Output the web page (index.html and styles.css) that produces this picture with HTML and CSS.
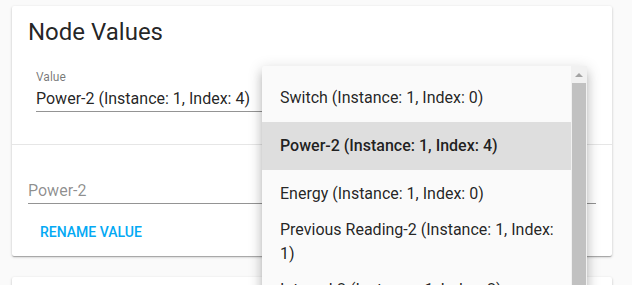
FILE: index.html
```html
<!DOCTYPE html>
<html lang="en">
<head>
    <meta charset="UTF-8">
    <title>Node Values</title>
    <link rel="stylesheet" href="styles.css">
</head>
<body>
    <div class="card">
        <h2 class="card-title">Node Values</h2>

        <div class="select-field">
            <label class="field-label">Value</label>
            <div class="select-input">Power-2 (Instance: 1, Index: 4)</div>
        </div>

        <div class="divider"></div>

        <div class="rename">
            <input class="text-input" type="text" placeholder="Power-2">
            <div class="actions">
                <button class="btn-text">Rename value</button>
            </div>
        </div>
    </div>

    <div class="card card-next"></div>

    <!-- menu aberto do select, fica por cima do card -->
    <div class="menu">
        <ul class="menu-list">
            <li class="menu-item">Switch (Instance: 1, Index: 0)</li>
            <li class="menu-item selected">Power-2 (Instance: 1, Index: 4)</li>
            <li class="menu-item">Energy (Instance: 1, Index: 0)</li>
            <li class="menu-item">Previous Reading-2 (Instance: 1, Index: 1)</li>
            <li class="menu-item">Interval-2 (Instance: 1, Index: 2)</li>
        </ul>
        <div class="scrollbar">
            <div class="scroll-arrow"></div>
            <div class="scroll-thumb"></div>
        </div>
    </div>
</body>
</html>
```

FILE: styles.css
```css
body {
    margin: 0;
    background: #fafafa;
    font-family: Roboto, "Noto Sans", sans-serif;
    color: rgba(0, 0, 0, 0.87);
    overflow: hidden;
    height: 285px;
}

.card {
    width: 600px;
    height: 250px;
    margin: 6px 12px 0;
    background: #fff;
    border-radius: 2px;
    box-shadow: 0 1px 3px rgba(0, 0, 0, 0.2), 0 1px 1px rgba(0, 0, 0, 0.14), 0 2px 1px -1px rgba(0, 0, 0, 0.12);
    box-sizing: border-box;
    padding-top: 12px;
}

.card-next {
    margin-top: 21px;
    height: 60px;
}

.card-title {
    margin: 0;
    padding: 0 16px;
    font-size: 24px;
    font-weight: 400;
    line-height: 28px;
}

.select-field {
    width: 268px;
    margin: 24px 0 0 24px;
    padding-bottom: 32px;
}

.field-label {
    display: block;
    font-size: 12px;
    line-height: 14px;
    color: rgba(0, 0, 0, 0.54);
}

.select-input {
    margin-top: 5px;
    font-size: 16px;
    line-height: 19px;
    padding-bottom: 3px;
    border-bottom: 1px solid rgba(0, 0, 0, 0.42);
    white-space: nowrap;
}

.divider {
    height: 1px;
    background: #e6e6e6;
}

.rename {
    padding: 0 16px;
}

.text-input {
    display: block;
    width: 100%;
    box-sizing: border-box;
    margin-top: 36px;
    padding: 0 0 3px;
    border: none;
    border-bottom: 1px solid rgba(0, 0, 0, 0.42);
    font-family: inherit;
    font-size: 16px;
    line-height: 19px;
    background: transparent;
    outline: none;
}

.text-input::placeholder {
    color: rgba(0, 0, 0, 0.45);
}

.actions {
    margin-top: 16px;
}

.btn-text {
    padding: 4px 12px;
    border: none;
    background: none;
    font-family: inherit;
    font-size: 14px;
    font-weight: 500;
    line-height: 16px;
    text-transform: uppercase;
    color: #03a9f4;
    cursor: pointer;
}

.menu {
    position: absolute;
    left: 262px;
    top: 66px;
    width: 325px;
    height: 260px;
    display: flex;
    background: #fafafa;
    border-radius: 2px;
    box-shadow: 0 5px 5px -3px rgba(0, 0, 0, 0.2), 0 8px 10px 1px rgba(0, 0, 0, 0.14), 0 3px 14px 2px rgba(0, 0, 0, 0.12);
}

.menu-list {
    flex: 1;
    list-style: none;
    margin: 0;
    padding: 8px 0;
}

.menu-item {
    display: flex;
    align-items: center;
    height: 24px;
    padding: 12px 14px 12px 18px;
    font-size: 16px;
    line-height: 24px;
    color: rgba(0, 0, 0, 0.87);
}

.menu-item.selected {
    background: #dedede;
    font-weight: 500;
}

.scrollbar {
    width: 16px;
    display: flex;
    flex-direction: column;
    background: #f1f1f1;
}

.scroll-arrow {
    height: 17px;
    display: flex;
    align-items: center;
    justify-content: center;
}

.scroll-arrow::before {
    content: "";
    border-left: 4px solid transparent;
    border-right: 4px solid transparent;
    border-bottom: 4px solid #a3a3a3;
}

.scroll-thumb {
    flex: 1;
    margin: 0 1px;
    background: #c1c1c1;
}
```
